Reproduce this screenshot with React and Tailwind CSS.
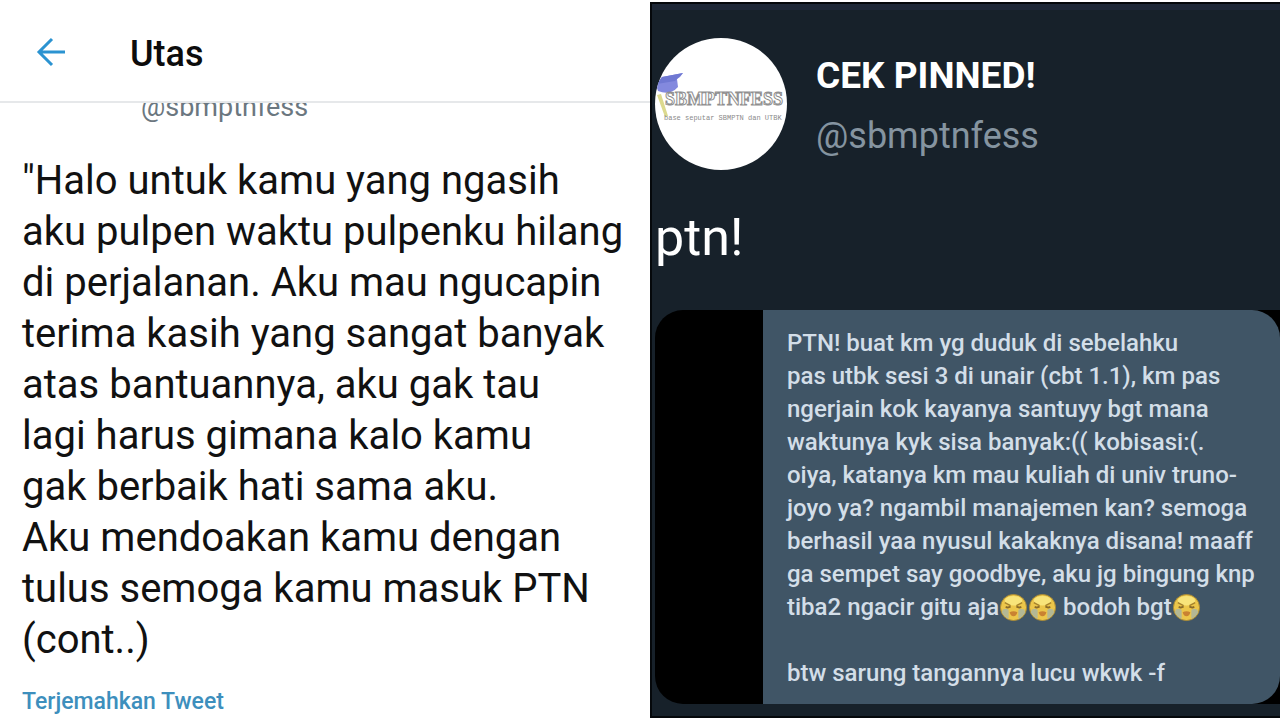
import React from 'react';

const tweetLines = [
  '"Halo untuk kamu yang ngasih',
  'aku pulpen waktu pulpenku hilang',
  'di perjalanan. Aku mau ngucapin',
  'terima kasih yang sangat banyak',
  'atas bantuannya, aku gak tau',
  'lagi harus gimana kalo kamu',
  'gak berbaik hati sama aku.',
  'Aku mendoakan kamu dengan',
  'tulus semoga kamu masuk PTN',
  '(cont..)',
];

const noteLines = [
  'PTN! buat km yg duduk di sebelahku',
  'pas utbk sesi 3 di unair (cbt 1.1), km pas',
  'ngerjain kok kayanya santuyy bgt mana',
  'waktunya kyk sisa banyak:(( kobisasi:(.',
  'oiya, katanya km mau kuliah di univ truno-',
  'joyo ya? ngambil manajemen kan? semoga',
  'berhasil yaa nyusul kakaknya disana! maaff',
  'ga sempet say goodbye, aku jg bingung knp',
];

function BackArrow() {
  return (
    <svg viewBox="0 0 30 30" className="w-[30px] h-[30px]" fill="none" stroke="#2b93d1" strokeWidth="3" aria-hidden="true">
      <path d="M29 15H3M16 2L3 15L16 28" />
    </svg>
  );
}

function SobEmoji() {
  return (
    <svg viewBox="0 0 30 30" className="inline-block w-[29px] h-[29px] align-[-7px]" role="img" aria-label="menangis">
      <circle cx="15" cy="15" r="13.5" fill="#ecc64a" stroke="#a98a35" strokeWidth="1" />
      <ellipse cx="15" cy="8" rx="9" ry="5" fill="#f8e47a" />
      <path d="M4 17Q9 15 10 18V27Q5 25 3 20ZM26 17Q21 15 20 18V27Q25 25 27 20Z" fill="#b4b894" />
      <path d="M6 10L12 13M24 10L18 13" stroke="#a5812a" strokeWidth="1.4" fill="none" />
      <path d="M7 14Q9 16 12 14M18 14Q21 16 23 14" stroke="#8a6a28" strokeWidth="1.8" fill="none" />
      <path d="M11 20Q15 18 19 20Q18 24 15 24Q12 24 11 20Z" fill="#c98232" />
    </svg>
  );
}

function Avatar() {
  return (
    <svg viewBox="0 0 132 132" className="w-[132px] h-[132px] shrink-0 rounded-full bg-white" role="img" aria-label="SBMPTNFESS">
      <path d="M2 57L6 56L13 78L10 79Z" fill="#dcd98e" />
      <path d="M7 39L28 35L25 39L22 41L23 49Q15 58 3 53L1 47Z" fill="#8389de" />
      <path d="M7 39L28 35L20 43L2 46Z" fill="#6f78d2" />
      <text x="10" y="67" fontFamily="'Liberation Serif', serif" fontWeight="bold" fontSize="18" fill="#ffffff" stroke="#8f8f8f" strokeWidth="1">SBMPTNFESS</text>
      <text x="9" y="82" fontFamily="'Liberation Mono', monospace" fontSize="7" fill="#8a8a8a">base seputar SBMPTN dan UTBK</text>
    </svg>
  );
}

function ThreadPanel() {
  return (
    <section className="bg-white overflow-hidden">
      <header className="flex items-center h-[103px] pt-[2px] pl-[36px] border-b-2 border-[#e6e8ea]">
        <button type="button" aria-label="Kembali" className="mr-[64px]"><BackArrow /></button>
        <h1 className="pt-1 text-[36px] leading-[48px] font-medium text-[#0c0c0c]">Utas</h1>
      </header>
      <div className="flex items-end h-[20px] overflow-hidden pl-[141px] text-[27px] leading-[32px] text-[#6b7780]">
        <span>@sbmptnfess</span>
      </div>
      <p className="mt-8 pl-[22px] text-[40px] leading-[51px] text-[#111111] whitespace-nowrap">
        {tweetLines.map(line => <span key={line} className="block">{line}</span>)}
      </p>
      <a href="#terjemah" className="block mt-5 pl-[22px] text-[23px] leading-[34px] font-medium text-[#3d8fbd]">Terjemahkan Tweet</a>
    </section>
  );
}

function PinnedPanel() {
  return (
    <section className="mt-[2px] mb-[2px] bg-[#17212a] border-l-2 border-y-2 border-[#05080b] overflow-hidden">
      <div className="h-[6px] bg-[#1e2837]" />
      <div className="flex items-start pt-7 pl-[3px]">
        <Avatar />
        <div className="pl-[29px] pt-4">
          <h2 className="text-[37px] leading-[44px] font-bold text-white">CEK PINNED!</h2>
          <div className="mt-4 text-[36px] leading-[44px] text-[#8594a0]">@sbmptnfess</div>
        </div>
      </div>
      <p className="mt-[38px] pl-[3px] text-[52px] leading-[60px] text-white">ptn!</p>
      <div className="mt-[42px] ml-[3px] bg-black rounded-l-[28px] pl-[108px]">
        <div className="bg-[#405566] rounded-r-[28px] pl-6 pt-[17px] pb-[14px] text-[24px] leading-[33px] font-medium text-[#d3dee8] whitespace-nowrap">
          {noteLines.map(line => <div key={line}>{line}</div>)}
          <div className="h-[33px]">tiba2 ngacir gitu aja<SobEmoji /><SobEmoji /> bodoh bgt<SobEmoji /></div>
          <p className="mt-[33px]">btw sarung tangannya lucu wkwk -f</p>
        </div>
      </div>
    </section>
  );
}

export default function App() {
  return (
    <main className="grid grid-cols-[65fr_63fr] min-h-screen bg-white font-['Roboto',sans-serif]">
      <ThreadPanel />
      <PinnedPanel />
    </main>
  );
}
